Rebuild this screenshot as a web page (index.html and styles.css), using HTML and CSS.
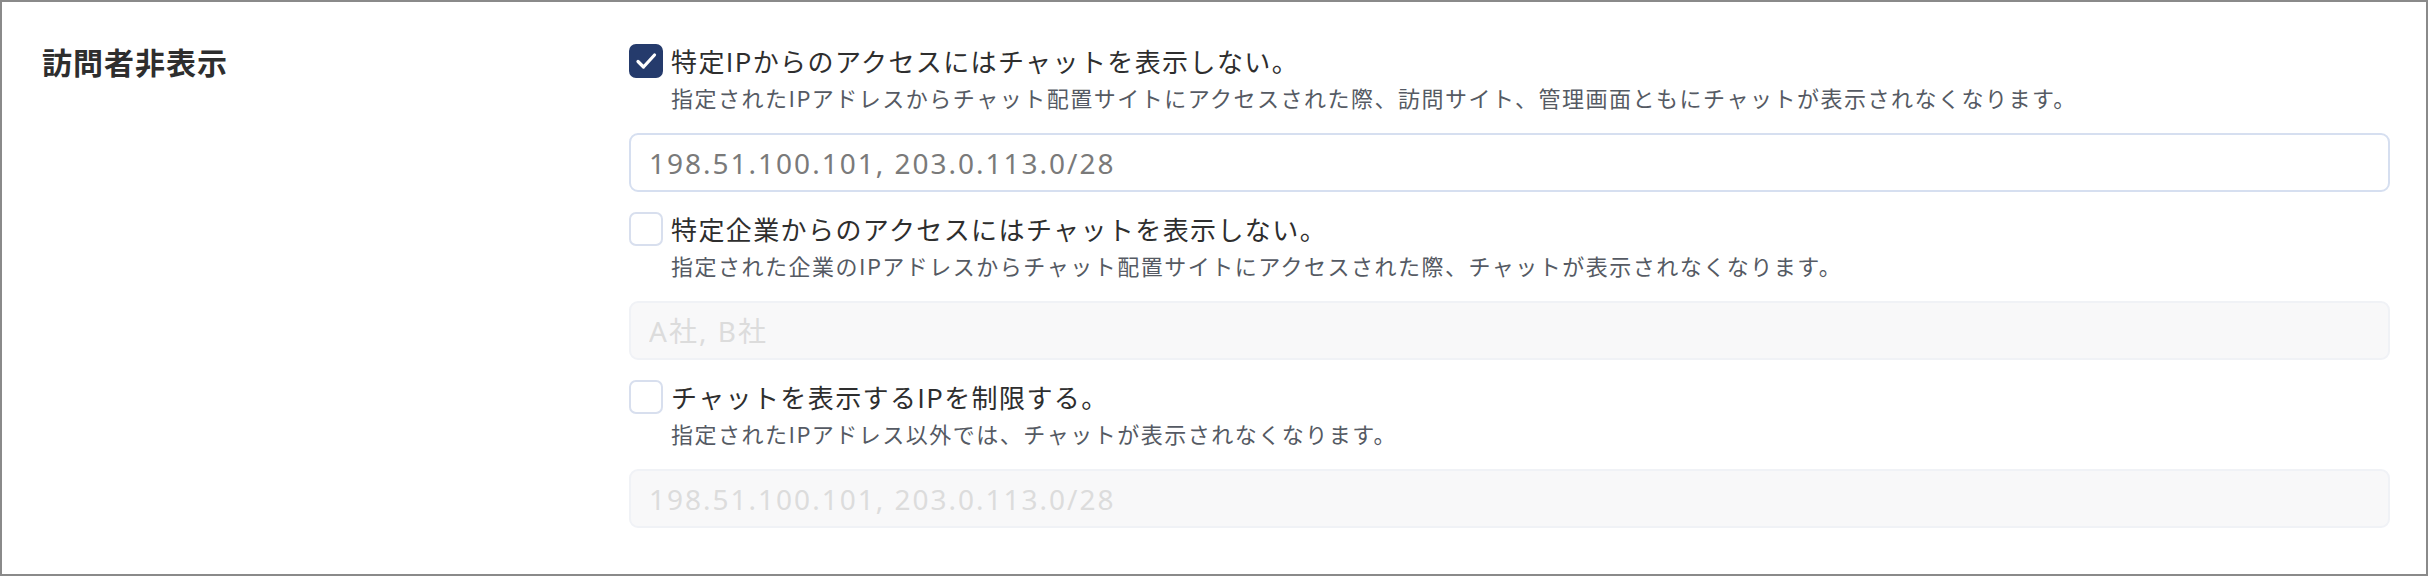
FILE: index.html
```html
<!DOCTYPE html>
<html lang="ja">
<head>
  <meta charset="UTF-8" />
  <title>訪問者非表示</title>
  <link rel="stylesheet" href="styles.css">
</head>
<body>

<div class="panel">
  <div class="section-title">訪問者非表示</div>

  <div class="options">
    <div class="option">
      <div class="option-head">
        <span class="check is-on">
          <svg viewBox="0 0 34 34" width="34" height="34"><path d="M9 17.5l5.5 5.5L25.5 11" /></svg>
        </span>
        <div class="option-text">
          <div class="option-label">特定IPからのアクセスにはチャットを表示しない。</div>
          <div class="option-desc">指定されたIPアドレスからチャット配置サイトにアクセスされた際、訪問サイト、管理画面ともにチャットが表示されなくなります。</div>
        </div>
      </div>
      <input class="field" type="text" value="198.51.100.101, 203.0.113.0/28">
    </div>

    <div class="option">
      <div class="option-head">
        <span class="check"></span>
        <div class="option-text">
          <div class="option-label">特定企業からのアクセスにはチャットを表示しない。</div>
          <div class="option-desc">指定された企業のIPアドレスからチャット配置サイトにアクセスされた際、チャットが表示されなくなります。</div>
        </div>
      </div>
      <input class="field" type="text" placeholder="A社, B社" disabled>
    </div>

    <div class="option">
      <div class="option-head">
        <span class="check"></span>
        <div class="option-text">
          <div class="option-label">チャットを表示するIPを制限する。</div>
          <div class="option-desc">指定されたIPアドレス以外では、チャットが表示されなくなります。</div>
        </div>
      </div>
      <input class="field" type="text" placeholder="198.51.100.101, 203.0.113.0/28" disabled>
    </div>
  </div>
</div>

</body>
</html>
```

FILE: styles.css
```css
body { margin: 0; font-family: "Noto Sans CJK JP", "Noto Sans", sans-serif; background-color: #fff; color: #333; }
.panel { box-sizing: border-box; height: 576px; border: 2px solid #8a8a8a; padding: 42px 36px 0 40px; display: grid; grid-template-columns: 587px 1fr; align-items: start; }
.section-title { font-size: 30px; font-weight: 700; line-height: 34px; letter-spacing: 1px; color: #2e2e2e; }
.option + .option { margin-top: 20px; }
.option-head { display: flex; gap: 8px; }
.check { flex: none; box-sizing: border-box; width: 34px; height: 34px; border: 2px solid #d8dfee; border-radius: 7px; background-color: #fff; }
.check svg { display: block; margin: -2px; fill: none; stroke: #fff; stroke-width: 3.2; stroke-linecap: round; stroke-linejoin: round; }
.check.is-on { background-color: #253b6c; border-color: #253b6c; }
.option-label { font-size: 26px; line-height: 34px; letter-spacing: 1.4px; color: #2e2e2e; }
.option-desc { font-size: 22px; line-height: 30px; margin-top: 4px; letter-spacing: 1.5px; color: #555a63; }
.field { display: block; box-sizing: border-box; width: 100%; height: 59px; margin-top: 21px; padding: 0 18px; border: 2px solid #d6dff0; border-radius: 9px; font-family: "Noto Sans", "Noto Sans CJK JP", sans-serif; font-size: 28px; letter-spacing: 2px; color: #7a7a7a; background-color: #fff; outline: none; }
.field:disabled { background-color: #f8f8f9; border-color: #f0f2f6; }
.field::placeholder { color: #dcdcdc; }
```
